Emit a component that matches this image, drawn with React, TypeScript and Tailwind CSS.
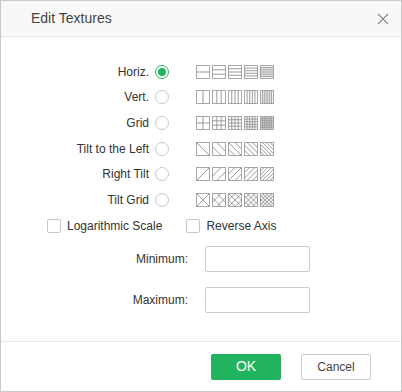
import React from 'react'

type Kind = 'h' | 'v' | 'grid' | 'left' | 'right' | 'cross'

const counts = [1, 2, 3, 4, 6]

function Swatch({ kind, n }: { kind: Kind; n: number }) {
  const lines: React.ReactNode[] = []
  const s = 13
  const step = s / (n + 1)
  for (let i = 1; i <= n; i++) {
    const p = 0.5 + step * i
    if (kind === 'h' || kind === 'grid') lines.push(<line key={'h' + i} x1={0.5} y1={p} x2={13.5} y2={p} />)
    if (kind === 'v' || kind === 'grid') lines.push(<line key={'v' + i} x1={p} y1={0.5} x2={p} y2={13.5} />)
  }
  if (kind === 'left' || kind === 'right' || kind === 'cross') {
    // diagonal hatching, n lines centred on the main diagonal
    const m = n === 1 ? [0] : Array.from({ length: n }, (_, i) => (i - (n - 1) / 2) * (26 / (n + 1)))
    m.forEach((o, i) => {
      if (kind === 'left' || kind === 'cross')
        lines.push(<line key={'l' + i} x1={0.5 + Math.max(0, o)} y1={0.5 + Math.max(0, -o)} x2={13.5 - Math.max(0, -o)} y2={13.5 - Math.max(0, o)} />)
      if (kind === 'right' || kind === 'cross')
        lines.push(<line key={'r' + i} x1={0.5 + Math.max(0, o)} y1={13.5 - Math.max(0, -o)} x2={13.5 - Math.max(0, -o)} y2={0.5 + Math.max(0, o)} />)
    })
  }
  return (
    <svg width="14" height="14" viewBox="0 0 14 14" className="block">
      <rect x="0.5" y="0.5" width="13" height="13" fill="#fff" stroke="#a8a8a8" />
      <g stroke="#999" strokeWidth="1">
        {lines}
      </g>
    </svg>
  )
}

const rows: { label: string; kind: Kind; checked?: boolean }[] = [
  { label: 'Horiz.', kind: 'h', checked: true },
  { label: 'Vert.', kind: 'v' },
  { label: 'Grid', kind: 'grid' },
  { label: 'Tilt to the Left', kind: 'left' },
  { label: 'Right Tilt', kind: 'right' },
  { label: 'Tilt Grid', kind: 'cross' },
]

export default function App() {
  return (
    <div
      className="w-[402px] h-[392px] bg-white border border-[#c9c9c9] flex flex-col text-[12px] text-[#333]"
      style={{ fontFamily: 'Arial, "Liberation Sans", sans-serif' }}
    >
      <div className="h-[36px] shrink-0 bg-[#f8f8f8] border-b border-[#e8e8e8] flex items-center justify-between pl-[30px] pr-[12px]">
        <span className="text-[14px] text-[#444]">Edit Textures</span>
        <svg width="12" height="12" viewBox="0 0 12 12" stroke="#888" strokeWidth="1.1">
          <path d="M1 1L11 11M11 1L1 11" />
        </svg>
      </div>

      <div className="flex-1 pt-[22px]">
        {rows.map((r) => (
          <div key={r.label} className="h-[25.6px] flex items-center">
            <div className="w-[148px] text-right">{r.label}</div>
            <div
              className={`ml-[6px] w-[14px] h-[14px] rounded-full border flex items-center justify-center ${
                r.checked ? 'border-[#22b35e]' : 'border-[#c8c8c8]'
              }`}
            >
              {r.checked && <div className="w-[8px] h-[8px] rounded-full bg-[#22b35e]" />}
            </div>
            <div className="ml-[27px] flex gap-[2px]">
              {counts.map((n) => (
                <Swatch key={n} kind={r.kind} n={n} />
              ))}
            </div>
          </div>
        ))}

        <div className="flex items-center mt-[3px] pl-[46px] h-[20px]">
          <div className="w-[14px] h-[14px] rounded-[2px] border border-[#c8c8c8]" />
          <span className="ml-[6px]">Logarithmic Scale</span>
          <div className="ml-[24px] w-[14px] h-[14px] rounded-[2px] border border-[#c8c8c8]" />
          <span className="ml-[6px]">Reverse Axis</span>
        </div>

        <div className="flex items-center mt-[10px] h-[26px]">
          <div className="w-[187px] text-right">Minimum:</div>
          <div className="ml-[17px] w-[105px] h-[26px] border border-[#ccc] rounded-[2px]" />
        </div>
        <div className="flex items-center mt-[15px] h-[26px]">
          <div className="w-[187px] text-right">Maximum:</div>
          <div className="ml-[17px] w-[105px] h-[26px] border border-[#ccc] rounded-[2px]" />
        </div>
      </div>

      <div className="h-[50px] shrink-0 border-t border-[#e8e8e8] flex items-center justify-end gap-[20px] pr-[30px]">
        <button className="w-[70px] h-[26px] rounded-[2px] bg-[#22b35e] text-white text-[14px]">OK</button>
        <button className="w-[70px] h-[26px] rounded-[2px] bg-white border border-[#ccc] text-[#444] text-[12px]">Cancel</button>
      </div>
    </div>
  )
}
